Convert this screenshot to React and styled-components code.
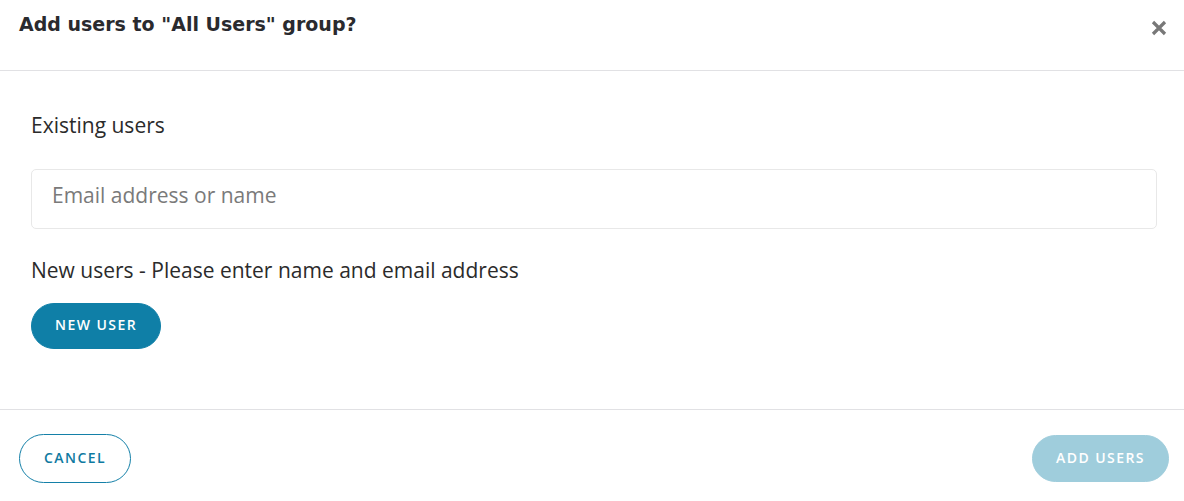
import React from "react";
import styled, { createGlobalStyle } from "styled-components";

const Global = createGlobalStyle`
  html, body { margin: 0; padding: 0; background: #fff; }
  body { font-family: "Open Sans", "Liberation Sans", sans-serif; color: #2b2b2b; }
  * { box-sizing: border-box; }
`;

const Dialog = styled.div`
  width: 1184px;
  height: 501px;
  display: flex;
  flex-direction: column;
  background: #fff;
`;

const Header = styled.header`
  height: 71px;
  display: flex;
  justify-content: space-between;
  align-items: flex-start;
  padding: 11px 16px 0 19px;
  border-bottom: 1px solid #e1e1e4;
`;

const Title = styled.h2`
  margin: 0;
  font-family: "DejaVu Sans", "Liberation Sans", sans-serif;
  font-weight: 700;
  font-size: 19px;
  line-height: 26px;
  color: #2a2a2e;
  letter-spacing: 0px;
`;

const Close = styled.button`
  border: 0;
  background: transparent;
  padding: 0;
  margin-top: 8px;
  width: 18px;
  height: 18px;
  display: flex;
  align-items: center;
  justify-content: center;
  cursor: pointer;
`;

const Body = styled.main`
  padding: 40px 27px 60px 31px;
  display: flex;
  flex-direction: column;
  border-bottom: 1px solid #e1e1e4;
`;

const Label = styled.div`
  font-size: 21px;
  line-height: 28px;
  color: #2b2b2b;
  margin-top: ${(p) => p.$mt || 0}px;
`;

const Input = styled.input`
  margin-top: 30px;
  height: 60px;
  width: 100%;
  border: 1px solid #e8e8e8;
  border-radius: 5px;
  padding: 0 20px 9px 20px;
  font-family: "Open Sans", sans-serif;
  font-size: 21px;
  color: #333;
  outline: none;
  &::placeholder { color: #7a7a7a; }
`;

const Pill = styled.button`
  height: ${(p) => p.$h}px;
  padding: 0 ${(p) => p.$px}px 3px;
  border-radius: 999px;
  font-family: "Open Sans", sans-serif;
  font-weight: 600;
  font-size: 14px;
  letter-spacing: 1.45px;
  text-transform: uppercase;
  cursor: pointer;
  border: 1px solid ${(p) => p.$border};
  background: ${(p) => p.$bg};
  color: ${(p) => p.$color};
`;

const NewUserWrap = styled.div`
  margin-top: 19px;
`;

const Footer = styled.footer`
  display: flex;
  justify-content: space-between;
  align-items: center;
  padding: 24px 15px 0 19px;
`;

export default function App() {
  return (
    <>
      <Global />
      <Dialog>
        <Header>
          <Title>Add users to "All Users" group?</Title>
          <Close aria-label="Close">
            <svg width="16" height="16" viewBox="0 0 16 16">
              <path d="M2 2L14 14M14 2L2 14" stroke="#787878" strokeWidth="3.2" strokeLinecap="butt" />
            </svg>
          </Close>
        </Header>
        <Body>
          <Label>Existing users</Label>
          <Input placeholder="Email address or name" />
          <Label $mt={27}>New users - Please enter name and email address</Label>
          <NewUserWrap>
            <Pill $h={46} $px={23} $bg="#0f7fa7" $border="#0f7fa7" $color="#fff">New User</Pill>
          </NewUserWrap>
        </Body>
        <Footer>
          <Pill $h={49} $px={24} $bg="#fff" $border="#1480a8" $color="#0f7aa1">Cancel</Pill>
          <Pill $h={47} $px={23} $bg="#9fcddc" $border="#9fcddc" $color="#fff">Add Users</Pill>
        </Footer>
      </Dialog>
    </>
  );
}
